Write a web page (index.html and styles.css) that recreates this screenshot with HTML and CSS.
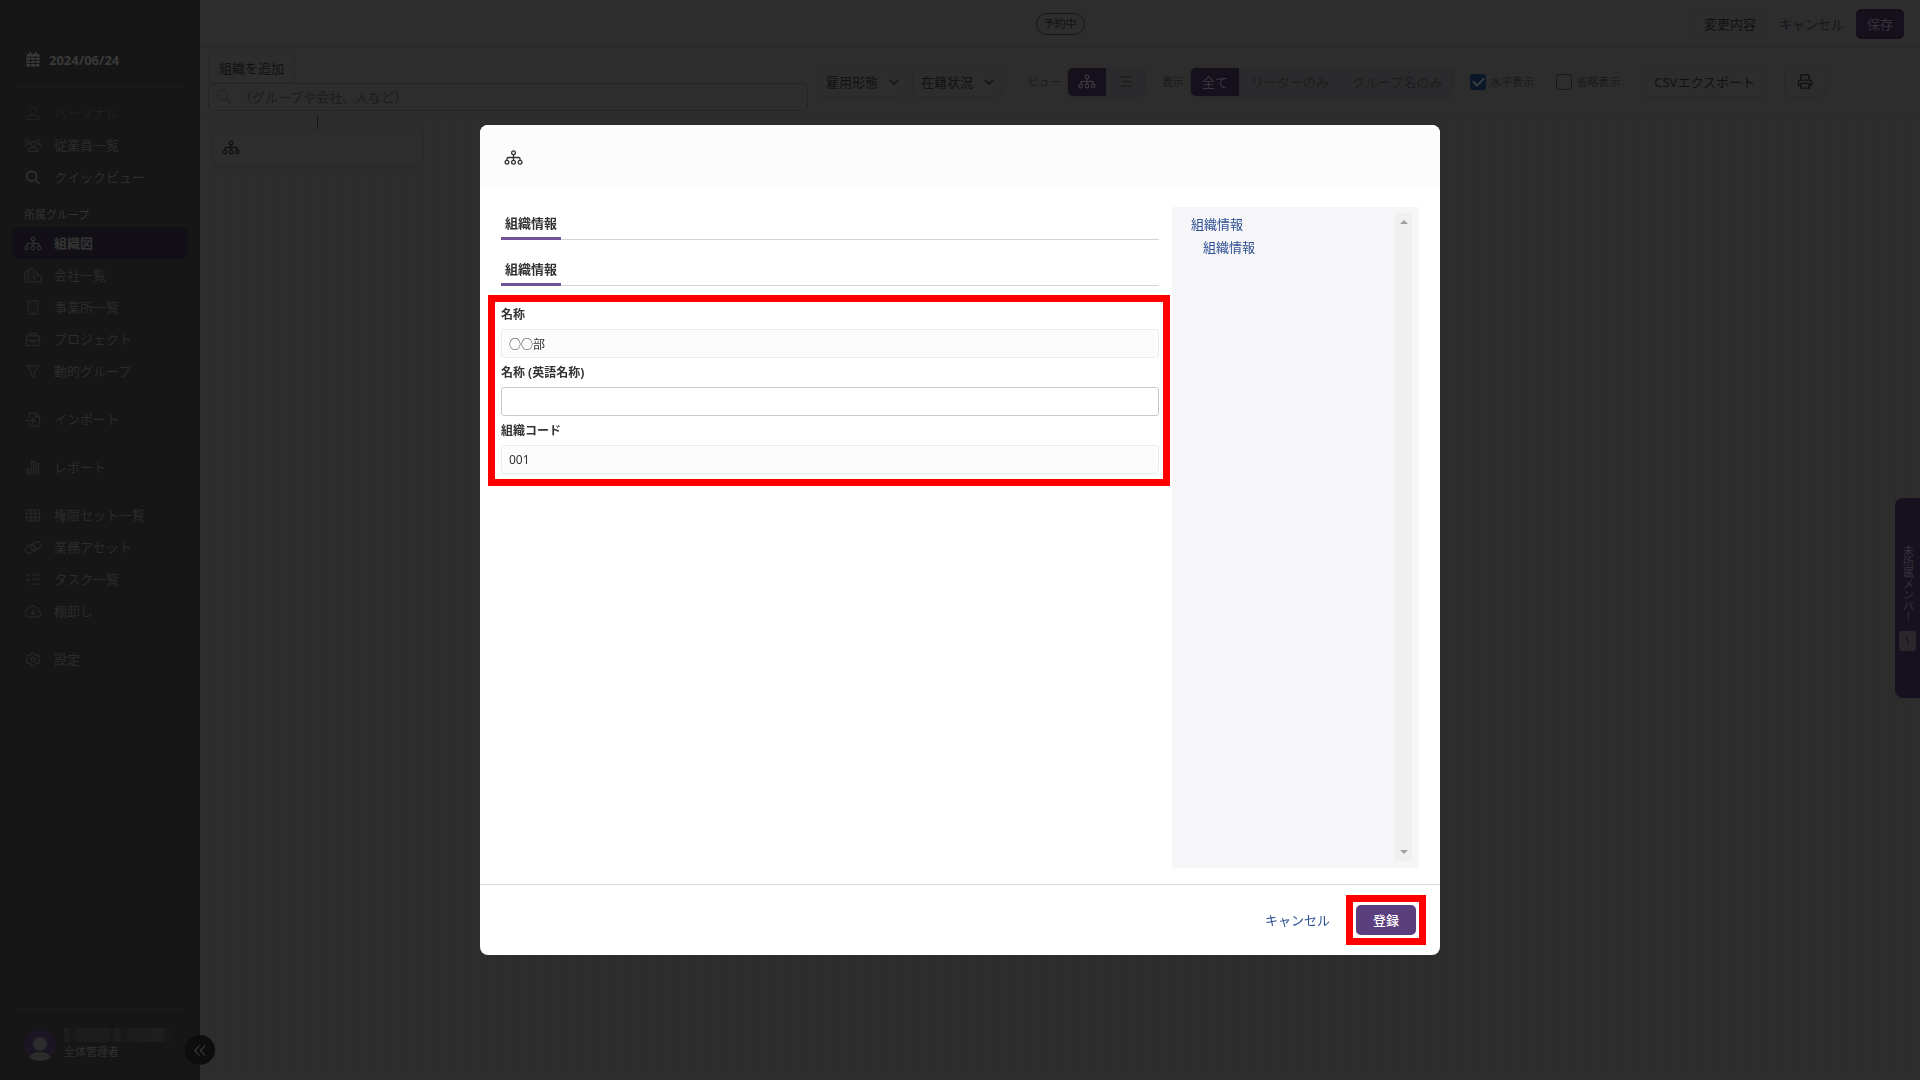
FILE: index.html
```
<!DOCTYPE html>
<html lang="ja">
<head>
    <meta charset="UTF-8">
    <meta name="viewport" content="width=device-width, initial-scale=1.0">
    <title>組織図</title>
    <link rel="stylesheet" href="styles.css">
</head>
<body>
    <!-- icon sprite -->
    <svg class="sprite" aria-hidden="true">
        <symbol id="i-org" viewBox="0 0 20 16">
            <circle cx="10" cy="3" r="2"/><circle cx="3" cy="13" r="2"/><circle cx="10" cy="13" r="2"/><circle cx="17" cy="13" r="2"/>
            <path d="M10 5v6M3 11V9.500Q3 8 4.500 8h11Q17 8 17 9.500V11"/>
        </symbol>
        <symbol id="i-calendar" viewBox="0 0 16 16">
            <path class="solid" d="M4 0h2v2h4V0h2v2h1.500A1.500 1.500 0 0 1 15 3.500V14a1.500 1.500 0 0 1-1.500 1.500h-11A1.500 1.500 0 0 1 1 14V3.500A1.500 1.500 0 0 1 2.500 2H4z"/>
            <path class="cut" d="M1 5.500h14M1 9h14M1 12.200h14M5.500 5v10M10.500 5v10"/>
        </symbol>
        <symbol id="i-user" viewBox="0 0 16 16">
            <circle cx="8" cy="5" r="3.500"/><path d="M1.500 14.500c0-3 2-4.500 4-4.500h5c2 0 4 1.500 4 4.500z"/>
        </symbol>
        <symbol id="i-users" viewBox="0 0 20 16">
            <circle cx="4" cy="3.500" r="2"/><circle cx="16" cy="3.500" r="2"/><circle cx="10" cy="6" r="2.500"/>
            <path d="M1 9.500c0-2 1-3 4-3M19 9.500c0-2-1-3-4-3M4.500 14.500c0-3 1.500-4 3-4h5c1.500 0 3 1 3 4z"/>
        </symbol>
        <symbol id="i-search" viewBox="0 0 16 16">
            <circle cx="6.500" cy="6.500" r="5.200"/><path d="M10.500 10.500L15 15"/>
        </symbol>
        <symbol id="i-city" viewBox="0 0 20 16">
            <path d="M1 15V5q0-1 1-1h3M5 15V2q0-1 1-1h4q1 0 1 1v13M11 4h3q1 0 1 1v3h3q1 0 1 1v6H1M3 7v1M3 10v1M8 4v1M8 7v1M8 10v1M13 8v1M13 11v1"/>
        </symbol>
        <symbol id="i-building" viewBox="0 0 16 16">
            <path d="M3 1h10v14H3zM6 4h1M9 4h1M6 7h1M9 7h1M6 10h1M9 10h1M7 15v-2h2v2"/>
        </symbol>
        <symbol id="i-case" viewBox="0 0 16 16">
            <rect x="1" y="4" width="14" height="10.500" rx="1.500"/><path d="M5 4V1.500h6V4M1 9h14M6 9v1.500h4V9"/>
        </symbol>
        <symbol id="i-filter" viewBox="0 0 16 16">
            <path d="M1.500 2h13L9.500 8v6l-3-2V8z"/>
        </symbol>
        <symbol id="i-import" viewBox="0 0 16 16">
            <path d="M4 6V1h7l4 4v10H4v-3M11 1v4h4M0 9h10M7 6l3 3-3 3"/>
        </symbol>
        <symbol id="i-chart" viewBox="0 0 16 16">
            <path d="M1.500 9h2.500v5.500H1.500zM6.500 1.500H9v13H6.500zM11.500 4H14v10.500h-2.500z"/>
        </symbol>
        <symbol id="i-table" viewBox="0 0 16 16">
            <rect x="1" y="2" width="14" height="12" rx="1"/><path d="M1 6h14M1 10h14M5.700 2v12M10.300 2v12"/>
        </symbol>
        <symbol id="i-link" viewBox="0 0 18 16">
            <rect x="0.500" y="6" width="11" height="7" rx="3.500" transform="rotate(-38 6 9.500)"/>
            <rect x="6.500" y="3" width="11" height="7" rx="3.500" transform="rotate(-38 12 6.500)"/>
        </symbol>
        <symbol id="i-tasks" viewBox="0 0 16 16">
            <path d="M1 3l1.200 1.200L4.500 1.500M1 8l1.200 1.200L4.500 6.500M2 13h1.500M7 3h8M7 8h8M6 13h9"/>
        </symbol>
        <symbol id="i-cloud" viewBox="0 0 20 16">
            <path d="M5 14a4 4 0 0 1-1-7.800A5.200 5.200 0 0 1 13.500 4a3.200 3.200 0 0 1 3 3.500A3.400 3.400 0 0 1 16 14zM10 6v5.500M7.500 9l2.500 2.500L12.500 9"/>
        </symbol>
        <symbol id="i-gear" viewBox="0 0 16 16">
            <path d="M6.500 1h3l.5 2 2 1 2-.5 1.300 2.500L14 8l1.300 2-1.300 2.500-2-.5-2 1-.5 2h-3L6 13l-2-1-2 .5L.7 10 2 8 .7 6 2 3.500 4 4l2-1z"/><circle cx="8" cy="8" r="2.300"/>
        </symbol>
        <symbol id="i-chevron" viewBox="0 0 10 10">
            <path d="M1 3l4 4 4-4"/>
        </symbol>
        <symbol id="i-list" viewBox="0 0 16 16">
            <path d="M2 3h12M4 8h10M2 13h12"/>
        </symbol>
        <symbol id="i-print" viewBox="0 0 16 16">
            <path d="M3.500 6.500V1h8l1 1v4.500M3.500 12H1V8.500q0-2 2-2h10q2 0 2 2V12h-2.500"/><path d="M3.500 10h9v5h-9z"/>
        </symbol>
        <symbol id="i-collapse" viewBox="0 0 16 16">
            <path d="M7.500 2.500L2.500 8l5 5.500M13.500 2.500L8.500 8l5 5.500"/>
        </symbol>
    </svg>

    <aside class="sidebar">
        <div class="date"><svg class="icon"><use href="#i-calendar"/></svg>2024/06/24</div>
        <nav class="menu">
            <a href="#" class="off"><svg class="icon"><use href="#i-user"/></svg>パーソナル</a>
            <a href="#"><svg class="icon"><use href="#i-users"/></svg>従業員一覧</a>
            <a href="#" class="bright"><svg class="icon"><use href="#i-search"/></svg>クイックビュー</a>
            <h2>所属グループ</h2>
            <a href="#" class="active"><svg class="icon"><use href="#i-org"/></svg>組織図</a>
            <a href="#"><svg class="icon"><use href="#i-city"/></svg>会社一覧</a>
            <a href="#"><svg class="icon"><use href="#i-building"/></svg>事業所一覧</a>
            <a href="#"><svg class="icon"><use href="#i-case"/></svg>プロジェクト</a>
            <a href="#"><svg class="icon"><use href="#i-filter"/></svg>動的グループ</a>
            <a href="#" class="gap"><svg class="icon"><use href="#i-import"/></svg>インポート</a>
            <a href="#" class="gap"><svg class="icon"><use href="#i-chart"/></svg>レポート</a>
            <a href="#" class="gap"><svg class="icon"><use href="#i-table"/></svg>権限セット一覧</a>
            <a href="#"><svg class="icon"><use href="#i-link"/></svg>業務アセット</a>
            <a href="#"><svg class="icon"><use href="#i-tasks"/></svg>タスク一覧</a>
            <a href="#"><svg class="icon"><use href="#i-cloud"/></svg>棚卸し</a>
            <a href="#" class="gap"><svg class="icon"><use href="#i-gear"/></svg>設定</a>
        </nav>
        <div class="account">
            <svg class="avatar" viewBox="0 0 32 32">
                <circle class="avatar-bg" cx="16" cy="16" r="16"/>
                <circle cx="16" cy="15" r="7"/><path d="M5 28q3-5 11-5t11 5q-4 4-11 4T5 28z"/>
            </svg>
            <div>
                <div class="masked-name"></div>
                <div class="role">全体管理者</div>
            </div>
        </div>
        <button class="collapse" aria-label="メニューを閉じる"><svg class="icon"><use href="#i-collapse"/></svg></button>
    </aside>

    <main class="main">
        <header class="topbar">
            <span class="status">予約中</span>
            <div class="top-actions">
                <button class="btn">変更内容</button>
                <a href="#">キャンセル</a>
                <button class="btn btn-save">保存</button>
            </div>
        </header>

        <div class="toolbar">
            <div class="add-search">
                <button class="btn btn-add">組織を追加</button>
                <div class="search">
                    <svg class="icon"><use href="#i-search"/></svg>
                    <input type="text" placeholder="（グループや会社、人など）" aria-label="検索">
                </div>
            </div>
            <div class="filters">
                <div class="select">
                    <select aria-label="雇用形態"><option>雇用形態</option></select>
                    <svg class="chevron"><use href="#i-chevron"/></svg>
                </div>
                <div class="select">
                    <select aria-label="在籍状況"><option>在籍状況</option></select>
                    <svg class="chevron"><use href="#i-chevron"/></svg>
                </div>
            </div>
            <div class="group">
                <span class="caption">ビュー</span>
                <div class="segment segment-icons">
                    <button class="on" aria-label="ツリー"><svg class="icon"><use href="#i-org"/></svg></button>
                    <button aria-label="リスト"><svg class="icon"><use href="#i-list"/></svg></button>
                </div>
            </div>
            <div class="group">
                <span class="caption">表示</span>
                <div class="segment">
                    <button class="on">全て</button>
                    <button>リーダーのみ</button>
                    <button>グループ名のみ</button>
                </div>
            </div>
            <div class="checks">
                <label><input type="checkbox" checked>水平表示</label>
                <label><input type="checkbox">省略表示</label>
            </div>
            <div class="exports">
                <button class="btn">CSVエクスポート</button>
                <button class="btn" aria-label="印刷"><svg class="icon"><use href="#i-print"/></svg></button>
            </div>
        </div>

        <section class="canvas">
            <div class="connector"></div>
            <div class="node"><svg class="icon"><use href="#i-org"/></svg></div>
        </section>
    </main>

    <button class="side-tab">
        <span class="side-label">未所属メンバー</span>
        <span class="count">1</span>
    </button>

    <div class="overlay">
        <div class="modal" role="dialog" aria-label="組織情報">
            <div class="modal-head"><svg class="icon"><use href="#i-org"/></svg></div>
            <div class="modal-body">
                <form class="form" id="org-form">
                    <h3><span>組織情報</span></h3>
                    <h3><span>組織情報</span></h3>
                    <div class="fields">
                        <label for="name">名称</label>
                        <input type="text" id="name" value="○○部" readonly>
                        <label for="name-en">名称 (英語名称)</label>
                        <input type="text" id="name-en">
                        <label for="code">組織コード</label>
                        <input type="text" id="code" value="001" readonly>
                    </div>
                </form>
                <div class="toc">
                    <nav>
                        <a href="#">組織情報</a>
                        <a href="#" class="sub">組織情報</a>
                    </nav>
                    <div class="track"><i class="up"></i><i class="down"></i></div>
                </div>
            </div>
            <div class="modal-foot">
                <a href="#">キャンセル</a>
                <div class="submit"><button type="submit" form="org-form">登録</button></div>
            </div>
        </div>
    </div>
</body>
</html>
```

FILE: styles.css
```
* {
    box-sizing: border-box;
}

body {
    margin: 0;
    display: flex;
    height: 100vh;
    overflow: hidden;
    background: #2d2d2d;
    color: #111111;
    font-family: "Noto Sans", "Noto Sans CJK JP", sans-serif;
    font-size: 13px;
    line-height: 20px;
}

button,
input,
select {
    font: inherit;
    color: inherit;
}

button {
    cursor: pointer;
}

a {
    text-decoration: none;
}

.sprite {
    position: absolute;
    width: 0;
    height: 0;
}

.icon,
.chevron {
    width: 18px;
    height: 15px;
    flex: none;
    fill: none;
    stroke: currentColor;
    stroke-width: 1.4;
}

.solid {
    fill: currentColor;
    stroke: none;
}

.cut {
    stroke: #161616;
    stroke-width: 1;
}

/* sidebar */
.sidebar {
    position: relative;
    width: 200px;
    flex: none;
    display: flex;
    flex-direction: column;
    background: #161616;
    color: #2c2c2c;
}

.date {
    display: flex;
    align-items: center;
    gap: 7px;
    height: 56px;
    margin: 32px 16px 0;
    padding-left: 8px;
    border-bottom: 1px solid #1a1a1a;
    color: #3a3a3a;
    font-weight: bold;
}

.menu {
    flex: 1;
    padding: 9px 12px;
}

.menu a {
    display: flex;
    align-items: center;
    gap: 12px;
    height: 32px;
    padding: 0 12px;
    border-radius: 6px;
    color: #2c2c2c;
}

.menu a .icon {
    color: #262626;
}

.menu a.off,
.menu a.off .icon {
    color: #202020;
}

.menu a.bright {
    color: #2e2e2e;
}

.menu a.bright .icon {
    color: #303030;
    stroke-width: 2;
}

.menu a.active {
    background: #121016;
    color: #343434;
    font-weight: bold;
}

.menu a.active .icon {
    color: #2e2e2e;
}

.menu a.gap {
    margin-top: 16px;
}

.menu h2 {
    margin: 12px 12px 2px;
    color: #343434;
    font-size: 11px;
    font-weight: normal;
    line-height: 20px;
}

.account {
    display: flex;
    align-items: center;
    gap: 8px;
    height: 72px;
    margin: 0 16px;
    padding-left: 8px;
    border-top: 1px solid #1a1a1a;
}

.avatar {
    width: 32px;
    height: 32px;
    fill: #2c2c2c;
}

.avatar-bg {
    fill: #1b1422;
}

.masked-name {
    width: 110px;
    height: 14px;
    background: linear-gradient(90deg, #1d1d1d 4px, #171717 8px, #1c1c1c 14px, #1c1c1c 44px, #171717 48px, #1f1f1f 52px, #181818 60px, #1c1c1c 66px, #1e1e1e 98px, #171918 102px);
}

.role {
    color: #303030;
    font-size: 11px;
}

.collapse {
    position: absolute;
    right: -15px;
    bottom: 15px;
    display: grid;
    place-items: center;
    width: 30px;
    height: 30px;
    padding: 0;
    border: 0;
    border-radius: 50%;
    background: #0d0d0e;
    color: #353535;
}

/* page behind the dialog */
.main {
    flex: 1;
    min-width: 0;
    display: flex;
    flex-direction: column;
}

.topbar {
    display: grid;
    grid-template-columns: 1fr auto 1fr;
    align-items: center;
    height: 48px;
    padding: 0 16px;
    border-bottom: 1px solid #292929;
}

.status {
    grid-column: 2;
    padding: 0 7px;
    border: 1px solid #171717;
    border-radius: 11px;
    font-size: 11px;
}

.top-actions {
    display: flex;
    justify-content: flex-end;
    align-items: center;
    gap: 12px;
}

.top-actions a {
    color: #16161f;
}

.btn {
    display: inline-flex;
    align-items: center;
    height: 30px;
    padding: 0 10px;
    border: 1px solid #292929;
    border-radius: 5px;
    background: #2d2d2d;
}

.btn-save {
    background: #15101c;
    border-color: #15101c;
    color: #343238;
}

.toolbar {
    display: flex;
    align-items: center;
    height: 68px;
    padding: 0 8px;
    border-bottom: 1px solid #292929;
    white-space: nowrap;
}

.add-search {
    flex: 0 1 600px;
    margin-right: 9px;
}

.btn-add {
    display: flex;
}

.search {
    display: flex;
    align-items: center;
    gap: 6px;
    height: 28px;
    padding: 0 6px;
    border: 1px solid #252525;
    border-radius: 4px;
    color: #252525;
}

.search input {
    flex: 1;
    min-width: 0;
    padding: 0;
    border: 0;
    outline: 0;
    background: none;
}

.search input::placeholder {
    color: #1c1c1c;
    opacity: 1;
}

.filters {
    display: flex;
    gap: 5px;
    margin-right: 26px;
}

.select {
    position: relative;
}

.select select {
    width: 90px;
    height: 30px;
    padding: 0 8px;
    appearance: none;
    border: 1px solid #292929;
    border-radius: 5px;
    background: #2d2d2d;
}

.chevron {
    position: absolute;
    top: 10px;
    right: 8px;
    width: 10px;
    height: 10px;
    pointer-events: none;
}

.group {
    display: flex;
    align-items: center;
    gap: 6px;
    margin-right: 16px;
}

.caption {
    color: #1a1a1a;
    font-size: 11px;
}

.segment {
    display: flex;
    border: 1px solid #29292b;
    border-radius: 6px;
    overflow: hidden;
}

.segment button {
    display: flex;
    align-items: center;
    height: 28px;
    padding: 0 11px;
    border: 0;
    border-right: 1px solid #29292b;
    background: #2b2b2d;
    color: #1d1d1d;
}

.segment button:last-child {
    border-right: 0;
}

.segment-icons button {
    padding: 0 10px;
}

.segment .on {
    background: #15101c;
    color: #3a383e;
}

.checks {
    display: flex;
    gap: 22px;
    margin-right: 22px;
}

.checks label {
    display: flex;
    align-items: center;
    gap: 4px;
    color: #1a1a1a;
    font-size: 11px;
}

.checks input {
    display: grid;
    place-items: center;
    width: 16px;
    height: 16px;
    margin: 0;
    appearance: none;
    border: 1px solid #181818;
    border-radius: 3px;
}

.checks input:checked {
    background: #0b1626;
    border-color: #0b1626;
}

.checks input:checked::before {
    content: "";
    width: 9px;
    height: 5px;
    margin-bottom: 3px;
    border: solid #3a3d42;
    border-width: 0 0 2px 2px;
    transform: rotate(-45deg);
}

.exports {
    display: flex;
    gap: 17px;
}

.exports .btn {
    padding: 0 11px;
}

.canvas {
    flex: 1;
    margin-bottom: 14px;
    padding: 0 13px;
    background: repeating-linear-gradient(90deg, #2d2d2d 0, #2d2d2d 15px, #2a2a2a 15px, #2a2a2a 16px);
}

.connector {
    width: 1px;
    height: 13px;
    margin-left: 104px;
    background: #151515;
}

.node {
    display: flex;
    align-items: center;
    width: 208px;
    height: 36px;
    padding: 0 9px;
    border-radius: 4px;
    background: #2d2d2d;
    box-shadow: 0 1px 3px #272727;
    color: #111114;
}

.side-tab {
    position: fixed;
    top: 498px;
    right: 0;
    display: flex;
    flex-direction: column;
    align-items: center;
    justify-content: center;
    gap: 9px;
    width: 25px;
    height: 200px;
    padding: 0;
    border: 0;
    border-radius: 8px 0 0 8px;
    background: #17101f;
    color: #37333c;
    font-size: 11px;
}

.side-label {
    writing-mode: vertical-rl;
}

.count {
    width: 17px;
    border-radius: 3px;
    background: #2a272b;
    color: #121014;
}

/* dialog */
.overlay {
    position: fixed;
    inset: 0;
    display: flex;
    align-items: center;
    justify-content: center;
}

.modal {
    display: flex;
    flex-direction: column;
    width: 50%;
    height: calc(100vh - 250px);
    border-radius: 8px;
    overflow: hidden;
    background: #ffffff;
    color: #333333;
}

.modal-head {
    display: flex;
    align-items: center;
    height: 64px;
    padding: 0 24px;
    background: #fcfcfc;
}

.modal-head .icon {
    width: 19px;
}

.modal-body {
    flex: 1;
    display: flex;
    gap: 13px;
    padding: 18px 21px 16px;
}

.form {
    flex: 1;
}

.form h3 {
    display: flex;
    margin: 0 0 14px;
    border-bottom: 1px solid #d4d4d4;
    font-size: 13px;
    line-height: 20px;
}

.form h3:first-child {
    margin-top: 1px;
}

.form h3 span {
    margin-bottom: -1px;
    padding: 5px 4px 4px;
    border-bottom: 3px solid #6f5499;
}

/* red frames mark the parts to fill in and press */
.fields,
.submit {
    position: relative;
}

.fields::after,
.submit::after {
    content: "";
    position: absolute;
    border: 7px solid #ff0000;
    pointer-events: none;
}

.fields::after {
    inset: -5px -11px -12px -13px;
}

.submit::after {
    inset: -10px;
}

.fields label {
    display: block;
    padding: 5px 0 4px;
    font-size: 12px;
    font-weight: bold;
    line-height: 20px;
}

.fields input {
    display: block;
    width: 100%;
    height: 29px;
    padding: 0 7px;
    border: 1px solid #c8c8c8;
    border-radius: 3px;
    background: #ffffff;
    font-size: 12px;
}

.fields input[readonly] {
    border-color: #ececec;
    background: #fcfcfc;
}

.toc {
    display: flex;
    justify-content: space-between;
    width: 247px;
    padding: 6px 7px 7px 19px;
    background: #f6f6f9;
}

.toc a {
    display: block;
    line-height: 23px;
    color: #2f4f93;
}

.toc .sub {
    padding-left: 12px;
}

.track {
    display: flex;
    flex-direction: column;
    align-items: center;
    justify-content: space-between;
    width: 17px;
    padding: 7px 0;
    background: #f0f0f0;
}

.up,
.down {
    border: solid transparent;
    border-width: 0 4px;
}

.up {
    border-bottom: 4px solid #a0a0a0;
}

.down {
    border-top: 4px solid #a0a0a0;
}

.modal-foot {
    display: flex;
    align-items: center;
    justify-content: flex-end;
    gap: 26px;
    height: 71px;
    padding: 0 24px;
    border-top: 1px solid #d8d8d8;
}

.modal-foot a {
    color: #2f4f93;
}

.submit button {
    display: block;
    width: 60px;
    height: 30px;
    padding: 0;
    border: 0;
    border-radius: 5px;
    background: #5b3e7d;
    color: #ffffff;
    font-weight: 500;
}
```
